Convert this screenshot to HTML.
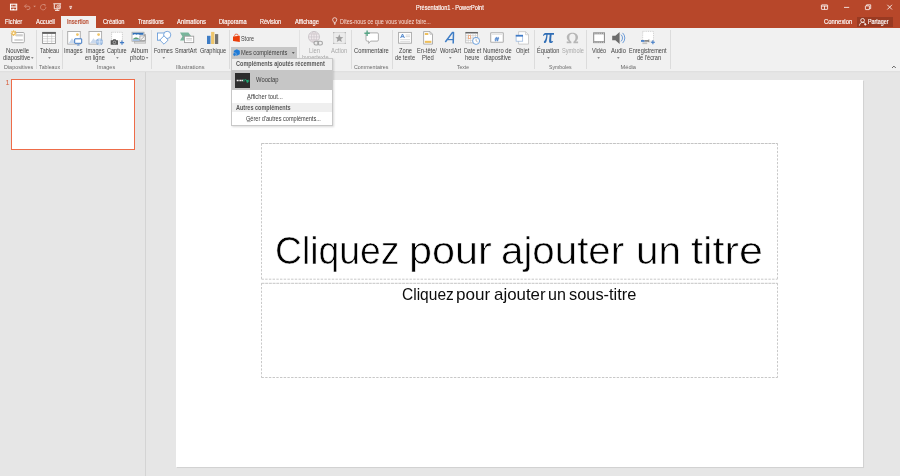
<!DOCTYPE html>
<html lang="fr">
<head>
<meta charset="utf-8">
<title>Présentation1 - PowerPoint</title>
<style>
*{box-sizing:border-box;margin:0;padding:0}
html,body{width:900px;height:476px;overflow:hidden;background:#e6e6e6;font-family:"Liberation Sans",sans-serif;}
body{position:relative;font-size:5.8px;color:#444;line-height:1}
#root{position:absolute;left:0;top:0;width:900px;height:476px;will-change:transform}
.abs{position:absolute}
#titlebar{position:absolute;left:0;top:0;width:900px;height:28px;background:#b7472a}
#ribbon{position:absolute;left:0;top:27.6px;width:900px;height:43.300px;background:#f1f1f1}
#shadow{position:absolute;left:0;top:70.8px;width:900px;height:2px;background:linear-gradient(#dedede,#e6e6e6)}
#acttab{position:absolute;left:61.4px;top:16.3px;width:34.4px;height:12px;background:#f1f1f1}
.sep{position:absolute;top:30px;width:1px;height:39px;background:#dcdcdc}
.l{position:absolute;white-space:nowrap;line-height:1;font-size:6.3px;transform-origin:0 0}
.l.w{color:#fff;-webkit-text-stroke:0.15px #fff}
.l.w2{color:#f6ded7}
.l.r{color:#b7472a;-webkit-text-stroke:0.2px #b7472a}
.l.k{color:#3f3f3f}
.l.d{color:#a9a9a9}
.l.g{color:#6a6a6a}
.l.T{color:#000;-webkit-text-stroke:0.6px #fff}
.l.S{color:#0d0d0d}
.l.mb{color:#575757}
.l.mk{color:#3c3c3c}
.arr{position:absolute;width:0;height:0;border-left:1.4px solid transparent;border-right:1.4px solid transparent;border-top:1.6px solid #6f6f6f}
#leftpane{position:absolute;left:145.1px;top:71.5px;width:1px;height:405px;background:#d4d4d4}
#thumb{position:absolute;left:11px;top:78.9px;width:123.9px;height:71.1px;background:#fff;border:1.65px solid #ee6c49}
#slide{position:absolute;left:175.7px;top:79.7px;width:687.3px;height:387.2px;background:#fff;box-shadow:0.6px 0.6px 0.5px #d2d2d2}
.ph{position:absolute;border:1px dashed #c2c2c2}
#menu{position:absolute;left:231.3px;top:58px;width:101.4px;height:67.500px;background:#fff;border:1px solid #c8c8c8;box-shadow:1px 1px 2px rgba(0,0,0,.15)}
</style>
</head>
<body>
<div id="root">
<div id="titlebar"></div>
<div id="ribbon"></div>
<div id="shadow"></div>
<div id="acttab"></div>
<div class="abs" style="left:856.7px;top:16.7px;width:36.2px;height:10px;background:#993a22"></div>

<!-- separators -->
<div class="sep" style="left:36px"></div>
<div class="sep" style="left:62px"></div>
<div class="sep" style="left:151px"></div>
<div class="sep" style="left:229px"></div>
<div class="sep" style="left:298.6px;background:#e2e2e2"></div>
<div class="sep" style="left:351px"></div>
<div class="sep" style="left:392px"></div>
<div class="sep" style="left:534px"></div>
<div class="sep" style="left:586.3px"></div>
<div class="sep" style="left:670px"></div>

<!-- Mes compléments pressed button -->
<div class="abs" style="left:231.1px;top:47.4px;width:66px;height:11px;background:#c6c6c6"></div>

<!-- dropdown arrows -->

<!-- LEFT PANE -->
<div id="leftpane"></div>
<div class="abs" style="left:5.400px;top:79px;font-size:7.2px;color:#d9603f">1</div>
<div id="thumb"></div>

<!-- SLIDE -->
<div id="slide"></div>
<svg class="abs" style="left:0;top:0" width="900" height="476" viewBox="0 0 900 476">
<g fill="none" stroke="#9c9c9c" stroke-width="0.600" stroke-dasharray="2.950 0.750">
<path d="M261.500 143.500H777.500"/><path d="M261.500 283.300H777.500"/><path d="M261.500 377.500H777.500" stroke="#b0b0b0" stroke-dasharray="2.400 1.300" stroke-width="0.700"/>
<path d="M261.500 143.500V279.200M777.500 143.500V279.200M261.500 283.300V377.500M777.500 283.300V377.500" stroke="#b2b2b2" stroke-dasharray="2.200 1.500" stroke-width="0.700"/>
<path d="M261.500 279.200H777.500" stroke="#c2c2c2" stroke-width="0.9" stroke-dasharray="2.400 1.300"/>
</g></svg>

<!--LABELS-->
<span class="l w" style="left:5.25px;top:19.00px;transform:scaleX(0.910)">Fichier</span>
<span class="l w" style="left:35.90px;top:19.00px;transform:scaleX(0.926)">Accueil</span>
<span class="l r" style="left:67.44px;top:19.00px;transform:scaleX(0.899)">Insertion</span>
<span class="l w" style="left:102.66px;top:19.00px;transform:scaleX(0.904)">Création</span>
<span class="l w" style="left:137.89px;top:19.00px;transform:scaleX(0.843)">Transitions</span>
<span class="l w" style="left:177.30px;top:19.00px;transform:scaleX(0.930)">Animations</span>
<span class="l w" style="left:219.35px;top:19.00px;transform:scaleX(0.896)">Diaporama</span>
<span class="l w" style="left:260.06px;top:19.00px;transform:scaleX(0.877)">Révision</span>
<span class="l w" style="left:294.50px;top:19.00px;transform:scaleX(0.912)">Affichage</span>
<span class="l w2" style="left:339.67px;top:19.00px;transform:scaleX(0.865)">Dites-nous ce que vous voulez faire...</span>
<span class="l w" style="left:415.66px;top:5.00px;transform:scaleX(0.884)">Présentation1 - PowerPoint</span>
<span class="l w" style="left:824.05px;top:19.00px;transform:scaleX(0.937)">Connexion</span>
<span class="l w" style="left:868.47px;top:19.00px;transform:scaleX(0.851)">Partager</span>
<span class="l k" style="left:6.33px;top:48.00px;transform:scaleX(0.943)">Nouvelle</span>
<span class="l k" style="left:2.87px;top:55.00px;transform:scaleX(0.916)">diapositive</span>
<span class="l k" style="left:39.89px;top:48.00px;transform:scaleX(0.860)">Tableau</span>
<span class="l k" style="left:64.44px;top:48.00px;transform:scaleX(0.901)">Images</span>
<span class="l k" style="left:85.54px;top:48.00px;transform:scaleX(0.901)">Images</span>
<span class="l k" style="left:85.38px;top:55.00px;transform:scaleX(0.898)">en ligne</span>
<span class="l k" style="left:107.37px;top:48.00px;transform:scaleX(0.878)">Capture</span>
<span class="l k" style="left:130.50px;top:48.00px;transform:scaleX(0.967)">Album</span>
<span class="l k" style="left:129.55px;top:55.00px;transform:scaleX(0.945)">photo</span>
<span class="l k" style="left:154.36px;top:48.00px;transform:scaleX(0.873)">Formes</span>
<span class="l k" style="left:175.37px;top:48.00px;transform:scaleX(0.878)">SmartArt</span>
<span class="l k" style="left:199.67px;top:48.00px;transform:scaleX(0.887)">Graphique</span>
<span class="l k" style="left:241.38px;top:36.00px;transform:scaleX(0.863)">Store</span>
<span class="l k" style="left:241.25px;top:50.00px;transform:scaleX(0.905)">Mes compléments</span>
<span class="l d" style="left:309.43px;top:48.00px;transform:scaleX(0.936)">Lien</span>
<span class="l d" style="left:301.65px;top:55.00px;transform:scaleX(0.905)">hypertexte</span>
<span class="l d" style="left:331.30px;top:48.00px;transform:scaleX(0.928)">Action</span>
<span class="l k" style="left:354.35px;top:48.00px;transform:scaleX(0.921)">Commentaire</span>
<span class="l k" style="left:399.07px;top:48.00px;transform:scaleX(0.909)">Zone</span>
<span class="l k" style="left:395.38px;top:55.00px;transform:scaleX(0.896)">de texte</span>
<span class="l k" style="left:417.15px;top:48.00px;transform:scaleX(0.902)">En-tête/</span>
<span class="l k" style="left:421.64px;top:55.00px;transform:scaleX(0.929)">Pied</span>
<span class="l k" style="left:439.99px;top:48.00px;transform:scaleX(0.914)">WordArt</span>
<span class="l k" style="left:463.57px;top:48.00px;transform:scaleX(0.851)">Date et</span>
<span class="l k" style="left:464.85px;top:55.00px;transform:scaleX(0.898)">heure</span>
<span class="l k" style="left:482.64px;top:48.00px;transform:scaleX(0.922)">Numéro de</span>
<span class="l k" style="left:484.07px;top:55.00px;transform:scaleX(0.906)">diapositive</span>
<span class="l k" style="left:515.88px;top:48.00px;transform:scaleX(0.881)">Objet</span>
<span class="l k" style="left:537.15px;top:48.00px;transform:scaleX(0.896)">Équation</span>
<span class="l d" style="left:561.76px;top:48.00px;transform:scaleX(0.896)">Symbole</span>
<span class="l k" style="left:592.09px;top:48.00px;transform:scaleX(0.877)">Vidéo</span>
<span class="l k" style="left:611.30px;top:48.00px;transform:scaleX(0.926)">Audio</span>
<span class="l k" style="left:629.36px;top:48.00px;transform:scaleX(0.878)">Enregistrement</span>
<span class="l k" style="left:636.58px;top:55.00px;transform:scaleX(0.887)">de l&#x27;écran</span>
<span class="l g" style="left:3.52px;top:65.00px;transform:scaleX(0.953);font-size:5.7px">Diapositives</span>
<span class="l g" style="left:39.08px;top:65.00px;transform:scaleX(0.924);font-size:5.7px">Tableaux</span>
<span class="l g" style="left:96.81px;top:65.00px;transform:scaleX(0.978);font-size:5.7px">Images</span>
<span class="l g" style="left:175.71px;top:65.00px;transform:scaleX(0.989);font-size:5.7px">Illustrations</span>
<span class="l g" style="left:354.47px;top:65.00px;transform:scaleX(0.932);font-size:5.7px">Commentaires</span>
<span class="l g" style="left:457.39px;top:65.00px;transform:scaleX(0.883);font-size:5.7px">Texte</span>
<span class="l g" style="left:548.96px;top:65.00px;transform:scaleX(0.907);font-size:5.7px">Symboles</span>
<span class="l g" style="left:620.50px;top:65.00px;transform:scaleX(1.000);font-size:5.7px">Média</span>
<span class="l T" style="left:275.26px;top:232.00px;transform:scaleX(0.968);font-size:38.6px">Cliquez</span>
<span class="l T" style="left:408.92px;top:232.00px;transform:scaleX(1.071);font-size:38.6px">pour</span>
<span class="l T" style="left:501.20px;top:232.00px;transform:scaleX(1.044);font-size:38.6px">ajouter</span>
<span class="l T" style="left:635.58px;top:232.00px;transform:scaleX(1.048);font-size:38.6px">un</span>
<span class="l T" style="left:690.70px;top:232.00px;transform:scaleX(1.118);font-size:38.6px">titre</span>
<span class="l S" style="left:401.77px;top:287.00px;transform:scaleX(0.977);font-size:15.9px">Cliquez</span>
<span class="l S" style="left:456.42px;top:287.00px;transform:scaleX(1.075);font-size:15.9px">pour</span>
<span class="l S" style="left:493.74px;top:287.00px;transform:scaleX(1.062);font-size:15.9px">ajouter</span>
<span class="l S" style="left:548.19px;top:287.00px;transform:scaleX(1.011);font-size:15.9px">un</span>
<span class="l S" style="left:569.48px;top:287.00px;transform:scaleX(1.031);font-size:15.9px">sous-titre</span>
<!--/LABELS-->

<!--ICONS-->
<svg class="abs" style="left:0;top:0" width="900" height="80" viewBox="0 0 900 80">
<!-- quick access: save -->
<rect x="10.5" y="4.200" width="6.200" height="5.700" fill="none" stroke="#fff" stroke-width="1.050"/>
<path d="M11 7h5.200" stroke="#fff" stroke-width="1.100"/>
<path d="M12.100 4.300v2.400M15.300 4.300v2.400" stroke="#fff" stroke-width="0.500"/>
<rect x="12.500" y="8.700" width="1.700" height="1.400" fill="#fff"/>
<!-- undo (dim) -->
<g fill="none" stroke="#d58c78" stroke-width="0.9">
<path d="M24.6 6.2h3.4a2 1.7 0 0 1 0 3.4h-1.2"/>
<path d="M26.4 4.3l-1.9 1.9 1.9 1.9"/>
</g>
<path d="M33.300 5.800h2.600l-1.300 1.500z" fill="#d99a88"/>
<!-- redo (dim) -->
<g fill="none" stroke="#d58c78" stroke-width="0.9">
<path d="M44.6 4.9a2.7 2.7 0 1 0 1.3 2.3"/>
<path d="M43.3 4.5h1.8V6.3" />
</g>
<!-- start presentation -->
<g fill="none" stroke="#fff" stroke-width="0.9">
<path d="M53.3 3.8h7.8"/>
<path d="M54.3 4.2v4.6h5.8V4.2"/>
<path d="M55 10.5h4.4" stroke-width="0.8"/>
<path d="M57.2 8.8v1.6" stroke-width="0.8"/>
</g>
<circle cx="58.4" cy="6.9" r="1.6" fill="#b7472a" stroke="#fff" stroke-width="0.7"/>
<path d="M57.9 6.1l1.3 0.8-1.3 0.8z" fill="#fff"/>
<!-- customize qat -->
<path d="M69.3 6.4h2.8" stroke="#fff" stroke-width="0.8"/>
<path d="M69.2 7.6h3l-1.5 1.6z" fill="#fff"/>
<!-- window controls -->
<g fill="none" stroke="#fff" stroke-width="0.8">
<rect x="821.4" y="4.9" width="6.2" height="4.5" rx="0.4"/>
<path d="M824.5 6.1v3.3M821.4 6.1h6.2"/>
<path d="M844 7.4h5.2"/>
<rect x="865.4" y="5.9" width="4" height="3.7" rx="0.3"/>
<path d="M866.6 5.9V4.8h4.1v3.8h-1.2"/>
<path d="M887.3 4.8l4.7 4.7M892 4.8l-4.7 4.7"/>
</g>
<!-- lightbulb -->
<g fill="none" stroke="#fff" stroke-width="0.7">
<path d="M333.8 22.4c0-1-1.2-1.3-1.2-2.6a2.1 2.1 0 0 1 4.2 0c0 1.3-1.2 1.6-1.2 2.6z"/>
<path d="M333.9 23.4h1.7M334.1 24.3h1.3"/>
</g>
<!-- person (share) -->
<g fill="none" stroke="#fff" stroke-width="0.8">
<circle cx="862.6" cy="20.4" r="1.9"/>
<path d="M859.4 25.6c0.3-2.2 1.6-3.2 3.2-3.2s2.4 0.6 2.9 1.6"/>
<path d="M865.3 23.3v2.4M864.1 24.5h2.4" stroke-width="0.7"/>
</g>
<!-- dropdown arrows -->
<g fill="#6a6a6a">
<path d="M31 57.3h2.6l-1.3 1.5z"/>
<path d="M48.1 57.3h2.6l-1.3 1.5z"/>
<path d="M116.1 57.3h2.6l-1.3 1.5z"/>
<path d="M145.8 57.3h2.6l-1.3 1.5z"/>
<path d="M162.5 57.3h2.6l-1.3 1.5z"/>
<path d="M449 57.3h2.6l-1.3 1.5z"/>
<path d="M547.1 57.3h2.6l-1.3 1.5z"/>
<path d="M597.3 57.3h2.6l-1.3 1.5z"/>
<path d="M617 57.3h2.6l-1.3 1.5z"/>
<path d="M291.9 52.2h2.8l-1.4 1.6z" fill="#3c3c3c"/>
</g>
<!-- collapse chevron -->
<path d="M892 68l1.9-1.9 1.9 1.9" fill="none" stroke="#555" stroke-width="0.9"/>
<!-- Nouvelle diapositive -->
<rect x="11.8" y="32.5" width="12.5" height="10.2" rx="1" fill="#fff" stroke="#a3a3a3" stroke-width="0.9"/>
<rect x="15.8" y="34.2" width="7" height="2.2" fill="#cdcdcd"/>
<rect x="14.4" y="39.2" width="8.4" height="1.6" fill="#cdcdcd"/>
<g stroke="#efc060" stroke-width="1.1" fill="none">
<path d="M13.6 30.3v5.8M10.7 33.2h5.8M11.5 31.1l4.2 4.200M15.7 31.1l-4.2 4.2"/>
</g>
<circle cx="13.6" cy="33.2" r="1.9" fill="#efc060"/>
<circle cx="13.6" cy="33.2" r="0.9" fill="#fffaf0"/>
<!-- Tableau -->
<rect x="42.6" y="32.3" width="12.9" height="11.1" fill="#fff" stroke="#8c8c8c" stroke-width="0.8"/>
<rect x="42.3" y="32" width="13.5" height="1.9" fill="#636363"/>
<path d="M47.4 34v9.4M51.7 34v9.4M42.6 36.4h12.9M42.6 38.7h12.9M42.6 41.2h12.9" stroke="#b8b8b8" stroke-width="0.55" fill="none"/>
<!-- Images -->
<rect x="67.7" y="31.5" width="12.6" height="12.6" fill="#fff" stroke="#a8a8a8" stroke-width="0.9"/>
<circle cx="77.4" cy="34.6" r="1.4" fill="#f0c466"/>
<path d="M68.6 43.2l3.4-4.9 1.6 2.2 1.2-1.3 1.5 4z" fill="#c9d8ec"/>
<rect x="74.7" y="38.8" width="7" height="4.5" rx="0.2" fill="#fff" stroke="#3f7ac6" stroke-width="1"/>
<path d="M76.9 45.2h2.8M78.3 43.800v1.400" stroke="#6f9bd4" stroke-width="0.8"/>
<!-- Images en ligne -->
<rect x="89" y="31.5" width="12.6" height="12.6" fill="#fff" stroke="#a8a8a8" stroke-width="0.9"/>
<circle cx="98.6" cy="34.6" r="1.4" fill="#f0c466"/>
<path d="M89.9 43.2l3.6-4.9 1.6 2.2 1.2-1.3 2.5 4z" fill="#c9d8ec"/>
<circle cx="99.5" cy="41.9" r="3.3" fill="#86acda"/>
<path d="M96.2 41.9h6.6M99.5 38.6v6.6" stroke="#e8f0fa" stroke-width="0.7"/>
<ellipse cx="99.5" cy="41.9" rx="1.6" ry="3.3" fill="none" stroke="#e8f0fa" stroke-width="0.6"/>
<!-- Capture -->
<rect x="111.6" y="32.3" width="10.8" height="8.6" fill="#fff" stroke="#b5b5b5" stroke-width="0.7" stroke-dasharray="0.9 0.9"/>
<path d="M110.7 40.3h2l0.7-1.1h2.2l0.7 1.1h1.7v4.4h-7.3z" fill="#555"/>
<circle cx="114.4" cy="42.4" r="1.3" fill="#555" stroke="#d8d8d8" stroke-width="0.6"/>
<path d="M122 40.5v4.2M119.9 42.6h4.2" stroke="#3f7ac6" stroke-width="1.1"/>
<!-- Album photo -->
<rect x="134" y="34" width="12" height="9.6" fill="#b9b9b9"/>
<rect x="135" y="41.6" width="10.2" height="1.2" fill="#dcdcdc"/>
<rect x="132" y="32.2" width="12" height="9" fill="#fff" stroke="#9c9c9c" stroke-width="0.7"/>
<rect x="132.6" y="32.8" width="10.8" height="2" fill="#2f6fb7"/>
<path d="M133 35.6c1.2-1.6 2.5-1.5 3.4-0.6 1.4-0.9 3-0.4 3.6 0.6 1.2-0.4 2.2 0.2 3 1v1.6h-10z" fill="#fff"/>
<path d="M132.6 39.4c1.8-2 3.6-2.3 5.2-1.4 1 0.5 1.8 1 2.4 1.6z" fill="#5c9f74"/>
<rect x="132.6" y="39.3" width="7.6" height="1.6" fill="#9fbbe0"/>
<rect x="139.9" y="35.9" width="5.3" height="4.7" fill="#f4f4f4" stroke="#8f8f8f" stroke-width="0.7"/>
<path d="M140.6 40l3.8-3.6" stroke="#9c9c9c" stroke-width="0.8"/>
<!-- Formes -->
<g fill="#fff" stroke="#5b93d6" stroke-width="0.8">
<rect x="157.4" y="33" width="7" height="7.2"/>
<circle cx="167.2" cy="34.9" r="3.6"/>
<path d="M164 35.8l4.2 4.2-4.2 4.2-4.2-4.2z"/>
</g>
<!-- SmartArt -->
<path d="M180 32.4h8.4l3 4-3 4h-8.4l2.4-4z" fill="#79b59b"/>
<rect x="184.5" y="36.2" width="9.2" height="6.4" fill="#fff" stroke="#9e9e9e" stroke-width="0.9"/>
<rect x="186.2" y="38" width="5.8" height="1.5" fill="#d4d4d4"/>
<rect x="186.2" y="40.2" width="5.8" height="0.9" fill="#e2e2e2"/>
<!-- Graphique -->
<rect x="207" y="35.8" width="3.5" height="8.2" fill="#3f7dc5"/>
<rect x="211.1" y="31.9" width="3.3" height="12.1" fill="#eec56b"/>
<rect x="215" y="34.1" width="3.2" height="9.9" fill="#727272"/>
<!-- Store -->
<path d="M233 36.6l6.8-0.9v6.3l-6.8-0.9z" fill="#ea3e0a"/>
<path d="M234.7 36.2v-0.9a1.2 1.1 0 0 1 1.2-1.1h1a1.2 1.1 0 0 1 1.2 1.1v0.6" fill="none" stroke="#ea3e0a" stroke-width="0.7"/>
<!-- Mes compléments -->
<path d="M236.8 49.2l3 1.6v3.4l-3 1.6-3-1.6v-3.4z" fill="#1e7bd8"/>
<path d="M234.6 52.6l1.6 0.9v1.8l-1.6 0.9-1.6-0.9v-1.8z" fill="#1e7bd8" stroke="#c6c6c6" stroke-width="0.5"/>
<!-- Lien hypertexte (disabled) -->
<circle cx="314" cy="36.9" r="5.5" fill="#efe9ec" stroke="#bdb8bb" stroke-width="0.7"/>
<path d="M308.5 36.9h11M314 31.4v11M309.6 34h8.8M309.6 39.8h8.8" stroke="#c6c0c4" stroke-width="0.6" fill="none"/>
<ellipse cx="314" cy="36.9" rx="2.6" ry="5.5" fill="none" stroke="#c6c0c4" stroke-width="0.6"/>
<rect x="314" y="41.300" width="4.700" height="3.700" rx="1.800" fill="#ececec" stroke="#a4a4a4" stroke-width="1.100"/>
<rect x="317.700" y="41.300" width="4.700" height="3.700" rx="1.800" fill="none" stroke="#a4a4a4" stroke-width="1.100"/>
<!-- Action (disabled) -->
<rect x="333.7" y="32.6" width="11.6" height="10.8" fill="#ebebeb" stroke="#d0d0d0" stroke-width="0.7"/>
<g fill="#b4b4b4"><rect x="333.1" y="32" width="1.2" height="1.2"/><rect x="344.7" y="32" width="1.2" height="1.2"/><rect x="333.1" y="42.8" width="1.2" height="1.2"/><rect x="344.7" y="42.8" width="1.2" height="1.2"/></g>
<path d="M339.3 34.3l1.1 2.7 2.9 0.2-2.2 1.9 0.7 2.8-2.5-1.5-2.5 1.5 0.7-2.8-2.2-1.9 2.9-0.2z" fill="#9f9f9f"/>
<!-- Commentaire -->
<path d="M367.2 32.9h10a1.2 1.2 0 0 1 1.2 1.2v5.8a1.2 1.2 0 0 1-1.2 1.2h-6.6l-1.9 2.3v-2.3h-1.5a1.2 1.2 0 0 1-1.2-1.2v-5.8a1.2 1.2 0 0 1 1.2-1.2z" fill="#fff" stroke="#9a9a9a" stroke-width="0.8"/>
<path d="M367.1 30.6v5.4M364.4 33.3h5.4" stroke="#57a686" stroke-width="1.4"/>
<!-- Zone de texte -->
<rect x="398.6" y="32.4" width="12.8" height="10.8" fill="#fff" stroke="#a6a6a6" stroke-width="0.9"/>
<path d="M400.6 38l1.9-4 1.9 4M401.3 36.7h2.4" fill="none" stroke="#3f7ac6" stroke-width="0.9"/>
<path d="M405.6 35h4.4M405.6 36.7h4.4" stroke="#d2d2d2" stroke-width="0.9"/>
<path d="M400.2 39.6h9.8M400.2 41.4h9.8" stroke="#cfcfcf" stroke-width="0.7"/>
<!-- En-tête/Pied -->
<path d="M423.6 31.6h6.4l2.5 2.6v9.9h-8.9z" fill="#fff" stroke="#a6a6a6" stroke-width="0.9"/>
<path d="M430 31.6v2.6h2.5" fill="none" stroke="#a6a6a6" stroke-width="0.7"/>
<rect x="424.8" y="33" width="3.5" height="2" fill="#eebf5c"/>
<rect x="424.8" y="40.8" width="6.6" height="2.1" fill="#eebf5c"/>
<!-- WordArt -->
<path d="M445.3 42l7.2-9.6h1l-0.3 11.2" fill="none" stroke="#3f7dc5" stroke-width="1.5" stroke-linejoin="round"/>
<path d="M447.4 39.6h6" stroke="#3f7dc5" stroke-width="1.2"/>
<!-- Date et heure -->
<rect x="465.8" y="32.3" width="11.8" height="10.6" fill="#fff" stroke="#a8a8a8" stroke-width="0.7"/>
<rect x="465.5" y="32" width="12.4" height="1.5" fill="#666"/>
<path d="M468.2 33.5v9.4M470.6 33.5v9.4M473 33.5v9.4M475.4 33.5v9.4M465.8 35.6h11.8M465.8 38h11.8M465.8 40.4h11.8" stroke="#c4c4c4" stroke-width="0.6"/>
<rect x="468.5" y="35.6" width="2" height="3" fill="#fff" stroke="#f0a676" stroke-width="0.8"/>
<circle cx="476.100" cy="40.900" r="3.500" fill="#fff" stroke="#5d97da" stroke-width="0.9"/>
<path d="M476.100 38.700v2.300l1.500 0.900" fill="none" stroke="#8a8a8a" stroke-width="0.6"/>
<!-- Numéro de diapositive -->
<rect x="490.7" y="32.7" width="12.6" height="9.6" rx="0.6" fill="#fff" stroke="#b0b0b0" stroke-width="1.1"/>
<path d="M492 34.4h10" stroke="#e0e0e0" stroke-width="0.9"/>
<path d="M495.500 41.300l1-4.400M497.300 41.300l1-4.400M494.900 38.300h4.200M494.500 39.900h4.200" stroke="#3f7ac6" stroke-width="0.800" fill="none"/>
<!-- Objet -->
<path d="M518.6 31.7h7l2.9 3v9.4h-9.9z" fill="#fff" stroke="#c2c2c2" stroke-width="0.8"/>
<path d="M525.6 31.7v3h2.9" fill="none" stroke="#c2c2c2" stroke-width="0.7"/>
<rect x="516.1" y="35.2" width="6.6" height="6" fill="#fff" stroke="#8fb1dc" stroke-width="0.7"/>
<rect x="515.8" y="34.9" width="7.2" height="1.7" fill="#3f7ac6"/>
<!-- Equation pi -->
<path d="M543 35.6c0.6-2 1.6-2.6 3.2-2.6h7.8v1.8h-2.4c-0.3 2.4-0.5 4.6-0.3 6 0.1 0.9 0.8 0.9 1.4 0.2l0.5 0.5c-0.9 1.4-2 1.7-2.9 1.5-1-0.3-1.3-1.2-1.2-2.6l0.6-5.6h-2.1c-0.2 2.6-0.6 5.4-1.4 7.2-0.4 0.9-1.2 1.3-1.9 0.9-0.6-0.4-0.6-1.2 0-1.8 1.2-1.3 1.8-3.6 2-6.3-1.2 0-1.9 0.2-2.6 1.2z" fill="#2f6db5"/>
<!-- Symbole omega (disabled) -->
<path d="M566.7 43.2v-1.7h2.6c-1.6-1-2.5-2.6-2.5-4.3 0-2.7 2.3-4.5 5.6-4.5s5.600 1.800 5.600 4.500c0 1.700-0.900 3.300-2.500 4.300h2.600v1.700h-4.700v-1.400c1.400-0.900 2.100-2.400 2.100-4.400 0-2.200-1.100-3.600-3.100-3.600s-3.100 1.400-3.100 3.600c0 2 0.700 3.500 2.100 4.400v1.400z" fill="#b6b6b6"/>
<!-- Vidéo -->
<rect x="593.2" y="32.3" width="11.7" height="10.8" fill="#858585"/>
<rect x="594.2" y="34.3" width="9.700" height="6.900" fill="#fff"/>
<g fill="#e9e9e9"><rect x="594.4" y="32.8" width="1.1" height="0.9"/><rect x="596.5" y="32.8" width="1.1" height="0.9"/><rect x="598.6" y="32.8" width="1.1" height="0.9"/><rect x="600.7" y="32.8" width="1.1" height="0.9"/><rect x="602.8" y="32.8" width="1.1" height="0.9"/>
<rect x="594.4" y="41.800" width="1.1" height="0.9"/><rect x="596.5" y="41.8" width="1.1" height="0.9"/><rect x="598.6" y="41.8" width="1.1" height="0.9"/><rect x="600.7" y="41.8" width="1.1" height="0.9"/><rect x="602.8" y="41.8" width="1.1" height="0.9"/></g>
<!-- Audio -->
<path d="M612.2 35.800h3.200l4.200-3.800v12l-4.200-3.800h-3.200z" fill="#6c6c6c"/>
<path d="M621 34.600a4.600 4.600 0 0 1 0 6.800M622.600 32.900a7 7 0 0 1 0 10.200" fill="none" stroke="#4d88d1" stroke-width="0.800"/>
<!-- Enregistrement de l'écran -->
<rect x="642.7" y="31.400" width="10.800" height="9.600" fill="#fff" stroke="#bdbdbd" stroke-width="0.700" stroke-dasharray="0.9 0.9"/>
<rect x="641" y="40.100" width="3.600" height="1.700" fill="#3f7ac6"/>
<path d="M644.600 40h3.200l1.500-0.800v3.400l-1.500-0.800h-3.200z" fill="#8a8a8a"/>
<rect x="642.400" y="42.400" width="4.800" height="1.700" fill="#c0c0c0"/>
<path d="M652.900 40.200v4M650.900 42.200h4" stroke="#3f7ac6" stroke-width="1.100"/>
<!-- Wooclap logo in menu handled separately -->

</svg>
<!--/ICONS-->

<!-- MENU -->
<div id="menu"></div>
<div class="abs" style="left:232.3px;top:59px;width:99.4px;height:11.300px;background:#efefef"></div>
<div class="abs" style="left:232.3px;top:70.2px;width:99.4px;height:20.3px;background:#c6c6c6"></div>
<div class="abs" style="left:235.1px;top:72.9px;width:14.9px;height:14.9px;background:#2d2d2d"></div>
<svg class="abs" style="left:0;top:0" width="900" height="130" viewBox="0 0 900 130">
<path d="M236.700 80.500h6.300" stroke="#f2f2f2" stroke-width="1.300" stroke-dasharray="1.300 0.350"/>
<path d="M243.900 79.200v2.500M244.800 80.300c0.600-0.800 1.500-0.800 1.700 0v1.200M247.300 80v3M247.300 80.600c0.900-0.700 1.700-0.300 1.700 0.400s-0.900 1-1.700 0.400" fill="none" stroke="#1fc183" stroke-width="0.800"/>
<path d="M246.900 99.700h3.300M246.900 121.600h3.900" stroke="#555" stroke-width="0.450"/>
</svg>
<div class="abs" style="left:232.3px;top:102.6px;width:99.4px;height:9.2px;background:#efefef"></div>
<!--MLABELS-->
<span class="l mb" style="left:236.18px;top:61.00px;transform:scaleX(0.881);font-weight:bold">Compléments ajoutés récemment</span>
<span class="l mk" style="left:256.48px;top:77.00px;transform:scaleX(0.925)">Wooclap</span>
<span class="l mk" style="left:246.70px;top:94.00px;transform:scaleX(0.923)">Afficher tout...</span>
<span class="l mb" style="left:235.59px;top:105.00px;transform:scaleX(0.876);font-weight:bold">Autres compléments</span>
<span class="l mk" style="left:246.37px;top:116.00px;transform:scaleX(0.886)">Gérer d&#x27;autres compléments...</span>
<!--/MLABELS-->
</div>
</body>
</html>
